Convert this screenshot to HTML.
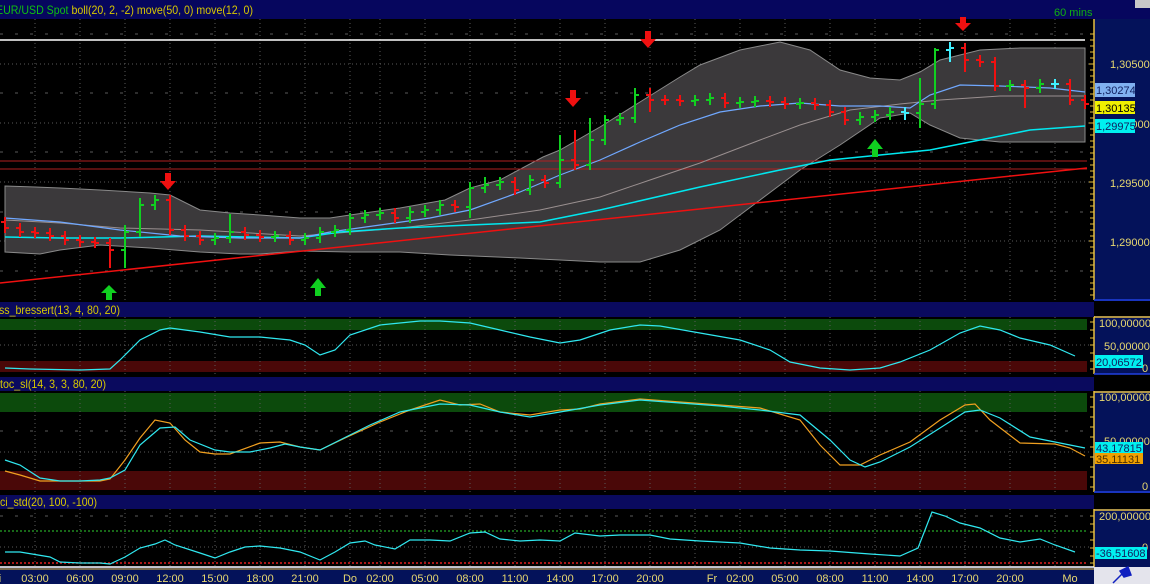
<!DOCTYPE html>
<html><head><meta charset="utf-8"><style>
html,body{margin:0;padding:0;background:#000;width:1150px;height:584px;overflow:hidden}
svg{display:block}
text{font-family:"Liberation Sans",sans-serif;font-size:11px}
</style></head><body>
<svg width="1150" height="584" viewBox="0 0 1150 584" xmlns="http://www.w3.org/2000/svg">
<rect x="0" y="0" width="1150" height="584" fill="#000"/>
<!-- title bar -->
<rect x="0" y="0" width="1150" height="19" fill="#06065e"/>
<rect x="1135" y="0" width="15" height="8" fill="#c8c8c8"/>
<text x="-4" y="14" fill="#10c010" style="font-size:12px" textLength="257" lengthAdjust="spacingAndGlyphs">EUR/USD Spot <tspan fill="#d8c800">boll(20, 2, -2) move(50, 0) move(12, 0)</tspan></text>
<text x="1054" y="16" fill="#10b010">60 mins</text>

<!-- right axis panels -->
<rect x="1094" y="19" width="56" height="282" fill="#04125a"/>
<rect x="1094" y="316" width="56" height="58" fill="#04125a"/>
<rect x="1094" y="391" width="56" height="102" fill="#04125a"/>
<rect x="1094" y="509" width="56" height="59" fill="#04125a"/>
<g stroke="#e8c040" stroke-width="1.5">
<line x1="1094" y1="19" x2="1094" y2="300"/>
<line x1="1094" y1="316" x2="1094" y2="374"/>
<line x1="1094" y1="391" x2="1094" y2="492"/>
<line x1="1094" y1="509" x2="1094" y2="567"/>
<line x1="1094" y1="317" x2="1150" y2="317"/>
<line x1="1094" y1="392" x2="1150" y2="392"/>
<line x1="1094" y1="510" x2="1150" y2="510"/>
</g>
<g stroke="#2040e0" stroke-width="1.5">
<line x1="1094" y1="300" x2="1150" y2="300"/>
<line x1="1094" y1="374" x2="1150" y2="374"/>
<line x1="1094" y1="492" x2="1150" y2="492"/>
</g>
<g stroke="#e8c040" stroke-width="1">
<path d="M1090 34H1094M1090 40H1094M1090 46H1094M1090 52H1094M1090 58H1094M1088 64H1094M1090 70H1094M1090 76H1094M1090 82H1094M1090 88H1094M1090 94H1094M1090 100H1094M1090 106H1094M1090 112H1094M1090 118H1094M1088 123H1094M1090 129H1094M1090 135H1094M1090 141H1094M1090 147H1094M1090 153H1094M1090 159H1094M1090 165H1094M1090 171H1094M1090 177H1094M1088 182H1094M1090 188H1094M1090 194H1094M1090 200H1094M1090 206H1094M1090 212H1094M1090 218H1094M1090 224H1094M1090 230H1094M1090 236H1094M1088 241H1094M1090 247H1094M1090 253H1094M1090 259H1094M1090 265H1094M1090 271H1094M1090 277H1094M1090 283H1094M1090 289H1094M1090 295H1094"/>
<path d="M1090 322H1094M1090 330H1094M1090 338H1094M1090 345H1094M1090 353H1094M1090 361H1094M1090 369H1094"/>
<path d="M1090 397H1094M1090 407H1094M1090 417H1094M1090 427H1094M1090 437H1094M1090 447H1094M1090 457H1094M1090 467H1094M1090 477H1094M1090 487H1094"/>
<path d="M1090 516H1094M1090 524H1094M1090 532H1094M1090 540H1094M1090 548H1094M1090 556H1094M1090 563H1094"/>
</g>

<!-- sub panel headers -->
<rect x="0" y="302" width="1094" height="15" fill="#0a0a5e"/>
<rect x="0" y="377" width="1094" height="14" fill="#0a0a5e"/>
<rect x="0" y="495" width="1094" height="14" fill="#0a0a5e"/>
<text x="-1" y="314" fill="#d8c800" style="font-size:12px" textLength="121" lengthAdjust="spacingAndGlyphs">ss_bressert(13, 4, 80, 20)</text>
<text x="0" y="388" fill="#d8c800" style="font-size:12px" textLength="106" lengthAdjust="spacingAndGlyphs">toc_sl(14, 3, 3, 80, 20)</text>
<text x="0" y="506" fill="#d8c800" style="font-size:12px" textLength="97" lengthAdjust="spacingAndGlyphs">ci_std(20, 100, -100)</text>

<!-- oscillator bands -->
<rect x="0" y="319" width="1087" height="11" fill="#0c4a0c"/>
<rect x="0" y="361" width="1087" height="11" fill="#4a0808"/>
<rect x="0" y="393" width="1087" height="19" fill="#0c4a0c"/>
<rect x="0" y="471" width="1087" height="19" fill="#4a0808"/>

<!-- grid -->
<g stroke="#5a5a5a" stroke-width="1" stroke-dasharray="1 3">
<path d="M35 19V300M80 19V300M125 19V300M170 19V300M215 19V300M260 19V300M305 19V300M350 19V300M380 19V300M425 19V300M470 19V300M515 19V300M560 19V300M605 19V300M650 19V300M695 19V300M740 19V300M785 19V300M830 19V300M875 19V300M920 19V300M965 19V300M1010 19V300M1055 19V300"/>
<path d="M35 317V374M80 317V374M125 317V374M170 317V374M215 317V374M260 317V374M305 317V374M350 317V374M380 317V374M425 317V374M470 317V374M515 317V374M560 317V374M605 317V374M650 317V374M695 317V374M740 317V374M785 317V374M830 317V374M875 317V374M920 317V374M965 317V374M1010 317V374M1055 317V374"/>
<path d="M35 391V492M80 391V492M125 391V492M170 391V492M215 391V492M260 391V492M305 391V492M350 391V492M380 391V492M425 391V492M470 391V492M515 391V492M560 391V492M605 391V492M650 391V492M695 391V492M740 391V492M785 391V492M830 391V492M875 391V492M920 391V492M965 391V492M1010 391V492M1055 391V492"/>
<path d="M35 509V567M80 509V567M125 509V567M170 509V567M215 509V567M260 509V567M305 509V567M350 509V567M380 509V567M425 509V567M470 509V567M515 509V567M560 509V567M605 509V567M650 509V567M695 509V567M740 509V567M785 509V567M830 509V567M875 509V567M920 509V567M965 509V567M1010 509V567M1055 509V567"/>
<path d="M0 64H1090M0 123H1090M0 182H1090M0 241H1090M0 345H1090M0 452H1090M0 547H1090"/>
</g>
<g stroke="#5a5a5a" stroke-width="1" stroke-dasharray="3 12">
<path d="M0 34H1090M0 93H1090M0 152H1090M0 212H1090M0 271H1090M0 431H1090M0 516H1090"/>
</g>

<!-- bollinger band -->
<path d="M5 186L35 187L60 188L100 190L150 193L170 195L200 210L230 213L260 215L300 218L330 218L350 215L400 208L445 200L470 188L500 180L543 157L560 150L600 127L640 102L680 77L700 65L740 50L780 42L810 50L840 70L870 78L900 80L920 72L940 60L980 50L1020 48L1085 48L1085 142L1000 142L960 138L930 125L910 113L880 118L840 145L800 170L760 200L720 230L680 250L640 262L600 262L560 260L520 258L450 255L400 252L350 252L300 251L260 254L240 254L200 252L150 248L100 245L60 250L40 254L5 252Z" fill="#3b393b" stroke="#8a8a8a" stroke-width="1"/>

<!-- horizontal lines -->
<line x1="0" y1="40" x2="1085" y2="40" stroke="#fff" stroke-width="1.5"/>
<line x1="0" y1="161" x2="1087" y2="161" stroke="#b02020" stroke-width="1"/>
<line x1="0" y1="169" x2="1087" y2="169" stroke="#b02020" stroke-width="1"/>

<!-- MAs -->
<polyline fill="none" stroke="#9a9090" stroke-width="1" points="5,220 60,223 120,228 200,230 300,236 400,228 470,220 540,210 600,197 650,180 700,163 760,140 800,125 850,110 900,104 940,100 1000,96 1085,96"/>
<polyline fill="none" stroke="#00e8f0" stroke-width="1.5" points="5,237 60,238 120,238 200,236 300,238 340,232 400,228 470,225 540,222 600,210 700,187 780,170 830,160 880,155 930,150 980,140 1030,130 1085,126"/>
<polyline fill="none" stroke="#70a8ff" stroke-width="1.2" points="5,218 60,222 120,230 180,236 240,238 300,238 330,232 380,225 430,218 470,210 520,192 560,175 600,160 640,142 680,125 720,112 760,106 800,103 840,106 880,106 910,108 930,95 960,85 1000,86 1050,88 1085,92"/>
<line x1="0" y1="283" x2="1087" y2="168" stroke="#f01010" stroke-width="1.5"/>

<!-- bars -->
<path fill="none" stroke="#f01010" stroke-width="2" d="M5 217V233M1 222H5M5 228H9M20 223V237M16 228H20M20 232H24M35 227V238M31 232H35M35 233H39M50 228V241M46 233H50M50 236H54M65 231V245M61 236H65M65 240H69M80 235V247M76 240H80M80 242H84M95 237V248M91 242H95M95 243H99M110 238V268M106 243H110M110 250H114M170 195V235M166 200H170M170 230H174M185 225V241M181 230H185M185 236H189M200 231V245M196 236H200M200 240H204M245 227V240M241 232H245M245 235H249M260 230V242M256 235H260M260 237H264M290 231V245M286 236H290M290 240H294M395 208V223M391 213H395M395 218H399M455 200V212M451 205H455M455 207H459M515 177V195M511 182H515M515 190H519M545 175V188M541 180H545M545 183H549M575 130V170M571 160H575M575 165H579M650 88V112M646 95H650M650 100H654M665 95V105M661 100H665M665 100H669M680 95V106M676 100H680M680 101H684M725 93V108M721 98H725M725 103H729M770 96V107M766 101H770M770 102H774M785 97V109M781 102H785M785 104H789M815 98V110M811 103H815M815 105H819M830 100V117M826 105H830M830 112H834M845 107V125M841 112H845M845 120H849M965 43V72M961 48H965M965 60H969M980 55V67M976 60H980M980 62H984M995 57V91M991 62H995M995 86H999M1025 80V108M1021 85H1025M1025 88H1029M1070 79V105M1066 84H1070M1070 100H1074M1085 95V109M1081 100H1085M1085 104H1089"/>
<path fill="none" stroke="#10d020" stroke-width="2" d="M125 225V268M121 250H125M125 232H129M140 198V237M136 232H140M140 205H144M155 195V210M151 205H155M155 200H159M215 233V245M211 240H215M215 238H219M230 214V243M226 238H230M230 232H234M275 231V242M271 237H275M275 236H279M305 233V245M301 240H305M305 238H309M320 227V243M316 238H320M320 232H324M335 225V237M331 232H335M335 230H339M350 213V235M346 230H350M350 218H354M365 210V223M361 218H365M365 215H369M380 208V220M376 215H380M380 213H384M410 207V223M406 218H410M410 212H414M425 205V217M421 212H425M425 210H429M440 200V215M436 210H440M440 205H444M470 182V218M466 207H470M470 188H474M485 177V193M481 188H485M485 185H489M500 177V190M496 185H500M500 182H504M530 175V195M526 190H530M530 180H534M560 135V188M556 183H560M560 160H564M590 118V170M586 165H590M590 140H594M605 115V145M601 140H605M605 120H609M620 113V125M616 120H620M620 118H624M635 88V123M631 118H635M635 95H639M695 95V106M691 101H695M695 100H699M710 93V105M706 100H710M710 98H714M740 97V108M736 103H740M740 102H744M755 96V107M751 102H755M755 101H759M800 98V109M796 104H800M800 103H804M860 112V125M856 120H860M860 117H864M875 110V122M871 117H875M875 115H879M890 107V120M886 115H890M890 112H894M920 78V128M916 113H920M920 104H924M935 48V109M931 104H935M935 50H939M1010 80V91M1006 86H1010M1010 85H1014M1040 79V93M1036 88H1040M1040 84H1044"/>
<path fill="none" stroke="#40f0ff" stroke-width="2" d="M905 107V120M901 112H905M905 113H909M950 42V62M946 50H950M950 48H954M1055 79V89M1051 84H1055M1055 84H1059"/>

<!-- arrows -->
<g fill="#f01010">
<path d="M165 173H171V181H176L168 190L160 181H165Z"/>
<path d="M570 90H576V98H581L573 107L565 98H570Z"/>
<path d="M645 31H651V39H656L648 48L640 39H645Z"/>
<path d="M960 17H966V23H971L963 31L955 23H960Z"/>
</g>
<g fill="#10d020">
<path d="M106 300V293H101L109 285L117 293H112V300Z"/>
<path d="M315 296V288H310L318 278L326 288H321V296Z"/>
<path d="M872 157V149H867L875 139L883 149H878V157Z"/>
</g>

<!-- oscillator curves -->
<polyline fill="none" stroke="#30e8f0" stroke-width="1.2" points="5,368 30,369 80,370 110,369 120,360 140,340 160,330 170,328 200,332 230,337 260,337 290,340 305,345 320,355 335,350 350,335 380,325 420,321 440,321 470,323 500,330 530,337 560,343 580,340 610,330 640,325 660,326 700,333 740,340 770,350 790,362 820,368 850,370 880,368 900,362 930,350 960,333 980,326 1000,330 1020,338 1050,345 1075,356"/>
<polyline fill="none" stroke="#f0a020" stroke-width="1.2" points="5,471 20,475 40,481 60,481 100,481 110,479 125,460 140,438 155,420 170,423 185,440 200,452 215,454 230,454 260,443 280,442 300,447 320,450 345,438 380,422 410,410 440,400 460,405 480,404 500,412 530,415 560,410 580,409 600,404 640,399 680,402 720,405 760,408 800,420 820,445 840,465 860,465 880,455 910,442 940,420 965,405 975,404 990,420 1020,443 1055,444 1070,448 1085,456"/>
<polyline fill="none" stroke="#30e8f0" stroke-width="1.2" points="5,460 20,465 40,478 60,481 80,481 100,480 110,478 125,470 140,445 160,428 175,427 190,440 215,450 230,452 250,452 270,448 285,444 300,447 320,450 340,440 370,425 400,412 440,404 470,405 500,412 530,417 560,412 600,405 640,400 680,403 720,406 760,410 800,415 830,440 850,460 865,467 880,462 910,447 940,428 965,412 980,410 1000,418 1030,437 1060,443 1085,448"/>
<line x1="0" y1="531" x2="1087" y2="531" stroke="#30d030" stroke-width="1" stroke-dasharray="2 2"/>
<line x1="0" y1="563" x2="1087" y2="563" stroke="#e02020" stroke-width="1.5" stroke-dasharray="2 2"/>
<polyline fill="none" stroke="#30e8f0" stroke-width="1.2" points="5,552 20,552 50,557 60,562 80,563 100,563 110,564 125,557 140,548 155,544 165,540 175,545 200,553 215,558 230,552 245,547 260,546 280,548 300,552 320,560 335,552 350,543 365,541 375,545 395,549 410,540 430,540 450,541 470,533 485,532 500,539 520,541 540,540 560,541 575,533 600,536 620,535 650,535 670,539 700,541 740,543 770,548 800,550 830,551 870,554 900,556 918,548 932,512 945,516 960,523 980,528 1000,538 1020,542 1040,539 1055,545 1075,552"/>

<!-- axis labels -->
<g fill="#e8d870">
<text x="1110" y="68">1,30500</text>
<text x="1110" y="128">1,30000</text>
<text x="1110" y="187">1,29500</text>
<text x="1110" y="246">1,29000</text>
<text x="1099" y="327">100,00000</text>
<text x="1104" y="350">50,00000</text>
<text x="1142" y="372">0</text>
<text x="1099" y="401">100,00000</text>
<text x="1104" y="445">50,00000</text>
<text x="1142" y="490">0</text>
<text x="1099" y="520">200,00000</text>
<text x="1142" y="551">0</text>
</g>
<!-- badges -->
<rect x="1095" y="83" width="40" height="14" fill="#80b0f0"/>
<text x="1096" y="94" fill="#102060">1,30274</text>
<rect x="1095" y="101" width="40" height="13" fill="#f0f000"/>
<text x="1096" y="112" fill="#000">1,30135</text>
<rect x="1095" y="119" width="40" height="14" fill="#00f0f0"/>
<text x="1096" y="130" fill="#102060">1,29975</text>
<rect x="1095" y="355" width="48" height="13" fill="#00f0f0"/>
<text x="1096" y="366" fill="#102060">20,06572</text>
<rect x="1095" y="442" width="48" height="11" fill="#00f0f0"/>
<text x="1096" y="452" fill="#102060">43,17815</text>
<rect x="1095" y="453" width="48" height="11" fill="#f0a000"/>
<text x="1096" y="463" fill="#503000">35,11131</text>
<rect x="1095" y="547" width="52" height="12" fill="#00f0f0"/>
<text x="1096" y="557" fill="#102060">-36,51608</text>

<!-- time axis -->
<rect x="0" y="567" width="1094" height="17" fill="#04125a"/>
<line x1="0" y1="567" x2="1094" y2="567" stroke="#fff" stroke-width="1.5"/>
<line x1="0" y1="569" x2="1094" y2="569" stroke="#e8c040" stroke-width="1"/>
<rect x="1094" y="567" width="56" height="17" fill="#e4e4ec"/>
<path d="M1113 583L1123 573M1120 571L1128 567L1131 575L1124 577Z" stroke="#1020c0" fill="#1020c0" stroke-width="1.5"/>
<g fill="#e8d870" text-anchor="middle" style="font-size:12px">
<text x="0" y="582">i</text>
<text x="35" y="582">03:00</text><text x="80" y="582">06:00</text><text x="125" y="582">09:00</text><text x="170" y="582">12:00</text><text x="215" y="582">15:00</text><text x="260" y="582">18:00</text><text x="305" y="582">21:00</text><text x="350" y="582">Do</text><text x="380" y="582">02:00</text><text x="425" y="582">05:00</text><text x="470" y="582">08:00</text><text x="515" y="582">11:00</text><text x="560" y="582">14:00</text><text x="605" y="582">17:00</text><text x="650" y="582">20:00</text><text x="712" y="582">Fr</text><text x="740" y="582">02:00</text><text x="785" y="582">05:00</text><text x="830" y="582">08:00</text><text x="875" y="582">11:00</text><text x="920" y="582">14:00</text><text x="965" y="582">17:00</text><text x="1010" y="582">20:00</text><text x="1070" y="582">Mo</text>
</g>
</svg>
</body></html>
